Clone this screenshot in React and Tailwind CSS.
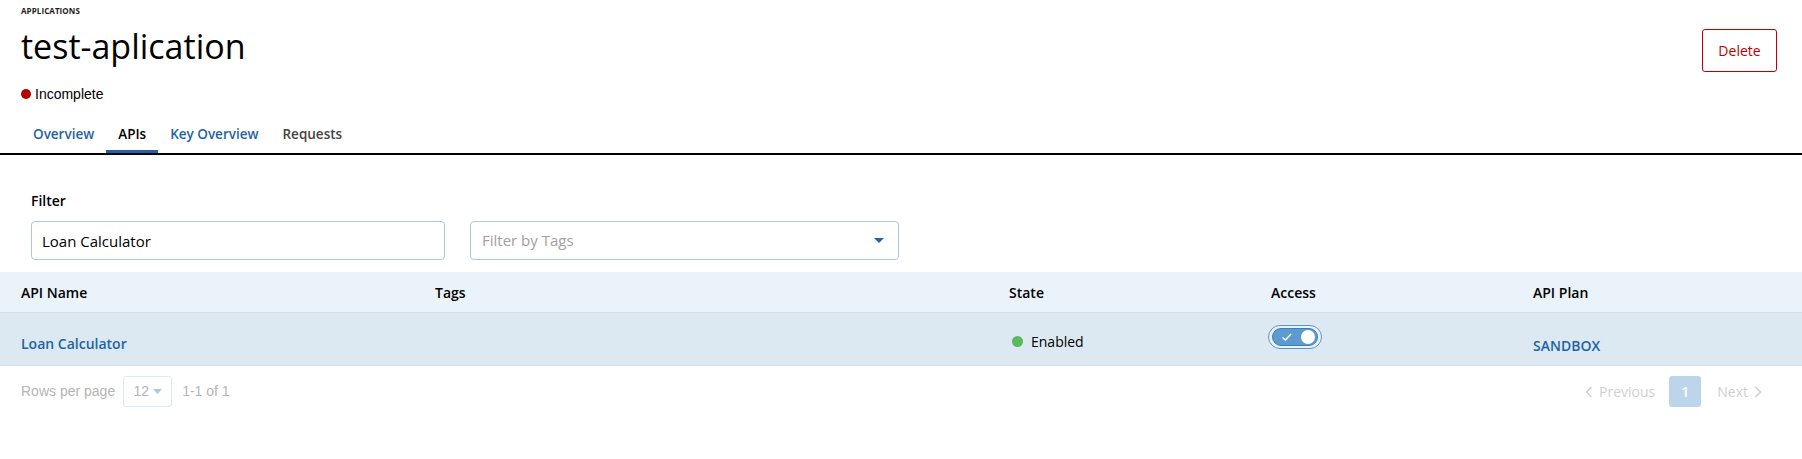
import { useState } from "react";

const tabs = ["Overview", "APIs", "Key Overview", "Requests"];

function Toggle({ on, onChange }) {
  return (
    <button
      type="button"
      onClick={() => onChange(!on)}
      className="flex h-[24px] w-[54px] items-center justify-center rounded-full border border-[#5b95c7] bg-white/40"
    >
      <span className={`flex h-[18px] w-[46px] items-center justify-between rounded-full border border-[#3f7fb8] px-[2px] ${on ? "bg-[#5b9bd0]" : "bg-[#b8c4cf]"}`}>
        <svg width="14" height="14" viewBox="0 0 14 14" className="ml-[5px]">
          <path d="M2.5 7.5 L5.5 10 L11 4" fill="none" stroke="white" strokeWidth="1.4" />
        </svg>
        <span className="h-[14px] w-[14px] rounded-full bg-white" />
      </span>
    </button>
  );
}

export default function App() {
  const [activeTab, setActiveTab] = useState("APIs");
  const [query, setQuery] = useState("Loan Calculator");
  const [access, setAccess] = useState(true);

  return (
    <div className="h-[459px] w-[1802px] bg-white font-['Open_Sans',sans-serif] text-black">
      <div className="flex items-start justify-between pl-[21px] pr-[25px] pt-[6px]">
        <div>
          <p className="text-[8px] font-bold leading-[10px] tracking-[0.01em] text-[#222]">APPLICATIONS</p>
          <h1 className="mt-[8px] text-[34px] font-medium leading-[44px] text-black">test-aplication</h1>
          <div className="mt-[18px] flex items-center gap-[4px] font-['Liberation_Sans',sans-serif] text-[14px] leading-[16px]">
            <span className="h-[10px] w-[10px] rounded-full bg-[#b00000]" />
            <span>Incomplete</span>
          </div>
        </div>
        <button
          type="button"
          className="mt-[23px] h-[43px] w-[75px] rounded-[3px] border border-[#c00000] text-[14px] text-[#c00000]"
        >
          Delete
        </button>
      </div>

      <nav className="mt-[22px] flex border-b-2 border-black pl-[21px]">
        {tabs.map((tab) => (
          <button
            key={tab}
            type="button"
            onClick={() => setActiveTab(tab)}
            className={`border-b-[3px] px-[12px] pb-[6px] text-[13.5px] font-semibold leading-[20px] ${
              activeTab === tab
                ? "border-[#1f63a6] text-black"
                : tab === "Requests"
                ? "border-transparent text-[#444]"
                : "border-transparent text-[#1f63a6]"
            }`}
          >
            {tab}
          </button>
        ))}
      </nav>

      <div className="px-[31px] pt-[36px]">
        <label className="block text-[14px] font-semibold leading-[20px]">Filter</label>
        <div className="mt-[10px] flex gap-[25px]">
          <input
            value={query}
            onChange={(event) => setQuery(event.target.value)}
            className="h-[39px] w-[414px] rounded-[4px] border border-[#a9c9e2] px-[10px] text-[15px] text-black outline-none"
          />
          <div className="flex h-[39px] w-[429px] items-center justify-between rounded-[4px] border border-[#a9c9e2] pl-[11px] pr-[14px]">
            <span className="text-[15px] text-[#a0a0a0]">Filter by Tags</span>
            <svg width="10" height="6" viewBox="0 0 10 6">
              <path d="M0 0 L10 0 L5 5 Z" fill="#1f63a6" />
            </svg>
          </div>
        </div>
      </div>

      <div className="mt-[12px]">
        <div className="grid h-[41px] grid-cols-[414px_574px_262px_262px_1fr] items-center border-b border-[#d8dde2] bg-[#ebf3fa] text-[14px] font-semibold">
          <span className="pl-[21px]">API Name</span>
          <span className="pl-[21px]">Tags</span>
          <span className="pl-[21px]">State</span>
          <span className="pl-[21px]">Access</span>
          <span className="pl-[21px]">API Plan</span>
        </div>
        <div className="grid h-[53px] grid-cols-[414px_574px_262px_262px_1fr] items-center border-b border-[#d8dde2] bg-[#dce9f3] text-[14px]">
          <a className="pl-[21px] pt-[8px] font-semibold text-[#1f63a6]">Loan Calculator</a>
          <span />
          <span className="flex items-center gap-[8px] pl-[24px] pt-[4px]">
            <span className="h-[11px] w-[11px] rounded-full bg-[#5cb85c]" />
            Enabled
          </span>
          <span className="pb-[4px] pl-[18px]">
            <Toggle on={access} onChange={setAccess} />
          </span>
          <a className="pl-[21px] pt-[12px] font-semibold text-[#1f63a6]">SANDBOX</a>
        </div>
      </div>

      <div className="flex items-center justify-between px-[21px] pt-[10px]">
        <div className="flex items-center gap-[8px] font-['Liberation_Sans',sans-serif] text-[14px] text-[#b5b5b5]">
          <span>Rows per page</span>
          <div className="flex h-[31px] w-[49px] items-center justify-center gap-[4px] rounded-[3px] border border-[#dde8f2]">
            <span>12</span>
            <svg width="9" height="5" viewBox="0 0 9 5">
              <path d="M0 0 L9 0 L4.5 5 Z" fill="#a9c9e2" />
            </svg>
          </div>
          <span className="ml-[2px]">1-1 of 1</span>
        </div>
        <div className="mr-[19px] flex items-center text-[14px] text-[#d0d0d0]">
          <span className="flex items-center gap-[6px]">
            <svg width="8" height="12" viewBox="0 0 8 12">
              <path d="M6.5 1 L1.5 6 L6.5 11" fill="none" stroke="#d0d0d0" strokeWidth="1.6" />
            </svg>
            Previous
          </span>
          <span className="ml-[14px] flex h-[31px] w-[32px] items-center justify-center rounded-[3px] bg-[#bcd5ea] font-semibold text-white">
            1
          </span>
          <span className="ml-[16px] flex items-center gap-[6px]">
            Next
            <svg width="8" height="12" viewBox="0 0 8 12">
              <path d="M1.5 1 L6.5 6 L1.5 11" fill="none" stroke="#d0d0d0" strokeWidth="1.6" />
            </svg>
          </span>
        </div>
      </div>
    </div>
  );
}
